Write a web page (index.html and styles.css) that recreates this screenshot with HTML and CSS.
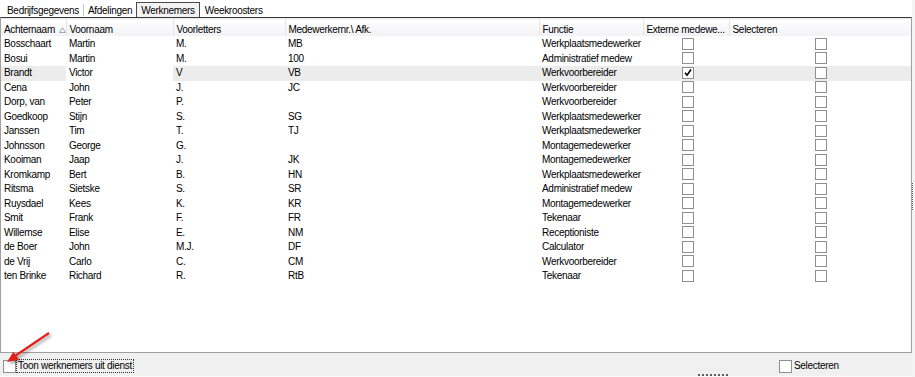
FILE: index.html
```html
<!DOCTYPE html>
<html lang="nl">
<head>
    <meta charset="UTF-8">
    <title>Werknemers</title>
    <link rel="stylesheet" href="styles.css">
</head>
<body>

    <div class="window">
        <div class="main">
            <!-- Tabs -->
            <div class="tabs">
                <span class="tab">Bedrijfsgegevens</span>
                <span class="tab-sep"></span>
                <span class="tab">Afdelingen</span>
                <span class="tab active">Werknemers</span>
                <span class="tab">Weekroosters</span>
            </div>

            <!-- Grid -->
            <div class="grid-box">
                <table class="grid">
                    <colgroup>
                        <col class="c-achternaam">
                        <col class="c-voornaam">
                        <col class="c-voorletters">
                        <col class="c-nummer">
                        <col class="c-functie">
                        <col class="c-extern">
                        <col>
                    </colgroup>
                    <thead>
                        <tr>
                            <th>Achternaam <svg class="sort" width="7" height="6" viewBox="0 0 7 6"><path d="M3.5 0.5 L6.5 5.5 L0.5 5.5 Z" fill="none" stroke="#a8a8a8"/></svg></th>
                            <th>Voornaam</th>
                            <th>Voorletters</th>
                            <th>Medewerkernr.\ Afk.</th>
                            <th>Functie</th>
                            <th>Externe medewe...</th>
                            <th class="last">Selecteren</th>
                        </tr>
                    </thead>
                    <tbody>
                        <tr><td>Bosschaart</td><td>Martin</td><td>M.</td><td>MB</td><td>Werkplaatsmedewerker</td><td class="cb1"><span class="cb"></span></td><td class="cb2"><span class="cb"></span></td></tr>
                        <tr><td>Bosui</td><td>Martin</td><td>M.</td><td>100</td><td>Administratief medew</td><td class="cb1"><span class="cb"></span></td><td class="cb2"><span class="cb"></span></td></tr>
                        <tr class="current"><td>Brandt</td><td class="focus">Victor</td><td>V</td><td>VB</td><td>Werkvoorbereider</td><td class="cb1"><span class="cb"><svg width="10" height="10" viewBox="0 0 10 10"><path d="M2 4.8 L4 7.2 L8 1.5" fill="none" stroke="#000" stroke-width="1.6"/></svg></span></td><td class="cb2"><span class="cb"></span></td></tr>
                        <tr><td>Cena</td><td>John</td><td>J.</td><td>JC</td><td>Werkvoorbereider</td><td class="cb1"><span class="cb"></span></td><td class="cb2"><span class="cb"></span></td></tr>
                        <tr><td>Dorp, van</td><td>Peter</td><td>P.</td><td></td><td>Werkvoorbereider</td><td class="cb1"><span class="cb"></span></td><td class="cb2"><span class="cb"></span></td></tr>
                        <tr><td>Goedkoop</td><td>Stijn</td><td>S.</td><td>SG</td><td>Werkplaatsmedewerker</td><td class="cb1"><span class="cb"></span></td><td class="cb2"><span class="cb"></span></td></tr>
                        <tr><td>Janssen</td><td>Tim</td><td>T.</td><td>TJ</td><td>Werkplaatsmedewerker</td><td class="cb1"><span class="cb"></span></td><td class="cb2"><span class="cb"></span></td></tr>
                        <tr><td>Johnsson</td><td>George</td><td>G.</td><td></td><td>Montagemedewerker</td><td class="cb1"><span class="cb"></span></td><td class="cb2"><span class="cb"></span></td></tr>
                        <tr><td>Kooiman</td><td>Jaap</td><td>J.</td><td>JK</td><td>Montagemedewerker</td><td class="cb1"><span class="cb"></span></td><td class="cb2"><span class="cb"></span></td></tr>
                        <tr><td>Kromkamp</td><td>Bert</td><td>B.</td><td>HN</td><td>Werkplaatsmedewerker</td><td class="cb1"><span class="cb"></span></td><td class="cb2"><span class="cb"></span></td></tr>
                        <tr><td>Ritsma</td><td>Sietske</td><td>S.</td><td>SR</td><td>Administratief medew</td><td class="cb1"><span class="cb"></span></td><td class="cb2"><span class="cb"></span></td></tr>
                        <tr><td>Ruysdael</td><td>Kees</td><td>K.</td><td>KR</td><td>Montagemedewerker</td><td class="cb1"><span class="cb"></span></td><td class="cb2"><span class="cb"></span></td></tr>
                        <tr><td>Smit</td><td>Frank</td><td>F.</td><td>FR</td><td>Tekenaar</td><td class="cb1"><span class="cb"></span></td><td class="cb2"><span class="cb"></span></td></tr>
                        <tr><td>Willemse</td><td>Elise</td><td>E.</td><td>NM</td><td>Receptioniste</td><td class="cb1"><span class="cb"></span></td><td class="cb2"><span class="cb"></span></td></tr>
                        <tr><td>de Boer</td><td>John</td><td>M.J.</td><td>DF</td><td>Calculator</td><td class="cb1"><span class="cb"></span></td><td class="cb2"><span class="cb"></span></td></tr>
                        <tr><td>de Vrij</td><td>Carlo</td><td>C.</td><td>CM</td><td>Werkvoorbereider</td><td class="cb1"><span class="cb"></span></td><td class="cb2"><span class="cb"></span></td></tr>
                        <tr><td>ten Brinke</td><td>Richard</td><td>R.</td><td>RtB</td><td>Tekenaar</td><td class="cb1"><span class="cb"></span></td><td class="cb2"><span class="cb"></span></td></tr>
                    </tbody>
                </table>
            </div>

            <!-- Footer -->
            <div class="footer">
                <label class="check focused"><span class="cb"></span><span class="label">Toon werknemers uit dienst</span></label>
                <span class="grip-h"></span>
                <label class="check select-all"><span class="cb"></span><span class="label">Selecteren</span></label>
            </div>
        </div>

        <div class="side">
            <span class="grip-v"></span>
        </div>

        <!-- red annotation arrow -->
        <svg class="arrow" width="70" height="50" viewBox="0 0 70 50">
            <path d="M49 8 L15 31" stroke="#e3201b" stroke-width="2.2" fill="none"/>
            <path d="M7 37 L19 34.8 L13.4 26.8 Z" fill="#e3201b"/>
        </svg>
    </div>

</body>
</html>
```

FILE: styles.css
```css
body {
    margin: 0;
    font-family: "Liberation Sans", Arial, sans-serif;
    font-size: 10px;
    letter-spacing: -0.3px;
    color: #000;
    background-color: #fff;
}
.window {
    position: relative;
    display: flex;
    width: 915px;
    height: 377px;
    overflow: hidden;
}
.main {
    width: 913px;
    display: flex;
    flex-direction: column;
}
.side {
    flex: 1;
    background-color: #f4f4f4;
    padding-top: 183px;
}
.grip-v {
    display: block;
    width: 2px;
    height: 27px;
    border-left: 1px dotted #606060;
}

/* Tabs */
.tabs {
    height: 17px;
    display: flex;
    align-items: flex-end;
    padding-left: 3px;
}
.tab {
    height: 14px;
    line-height: 15px;
    padding: 0 4px;
}
.tab-sep {
    width: 1px;
    height: 12px;
    margin-bottom: 1px;
    background-color: #c8c8c8;
}
.tab.active {
    height: 14px;
    border: 1px solid #4a4a4a;
    border-bottom: none;
    background-color: #f3f3f3;
    margin-right: 1px;
}

/* Grid */
.grid-box {
    height: 334px;
    border-top: 1px solid #3a3a3a;
    border-left: 1px solid #a0a0a0;
    border-right: 1px solid #a0a0a0;
    border-bottom: 1px solid #a0a0a0;
    background-color: #fff;
}
.grid {
    width: 100%;
    table-layout: fixed;
    border-collapse: collapse;
}
.c-achternaam { width: 65px; }
.c-voornaam { width: 107px; }
.c-voorletters { width: 112px; }
.c-nummer { width: 254px; }
.c-functie { width: 104px; }
.c-extern { width: 86px; }
.grid th {
    height: 14px;
    padding: 3px 0 0 3px;
    text-align: left;
    font-weight: normal;
    white-space: nowrap;
    overflow: hidden;
    background: linear-gradient(#ffffff, #f2f2f6);
    border-right: 1px solid #e6e6ea;
    border-top: 1px solid #e9e9ef;
}
.grid th.last {
    border-right: none;
}
.sort {
    margin-left: 2px;
    vertical-align: 0;
}
.grid td {
    height: 14.5px;
    padding: 0 0 0 3px;
    white-space: nowrap;
    overflow: hidden;
    line-height: 14px;
}
.grid tbody tr:first-child td {
    padding-top: 1px;
}
.grid tr.current td {
    background-color: #ececec;
}
.grid tr.current td.focus {
    background-color: #fff;
}
.grid td.cb1 {
    padding-left: 39px;
}
.grid td.cb2 {
    padding-left: 86px;
}
.cb {
    display: inline-block;
    width: 10px;
    height: 10px;
    border: 1px solid #8e8f8f;
    background-color: #fff;
    vertical-align: middle;
    position: relative;
    top: -1px;
}
.cb svg {
    display: block;
}

/* Footer */
.footer {
    flex: 1;
    display: flex;
    align-items: center;
    background-color: #f0f0f0;
    border-bottom: 1px solid #fafafa;
    padding: 3px 0 0 3px;
}
.check {
    display: flex;
    align-items: center;
}
.check .cb {
    top: 0;
    width: 11px;
    height: 11px;
}
.check .label {
    padding: 0 1px;
    margin-left: 1px;
    line-height: 12px;
}
.check.focused .label {
    outline: 1px dotted #333;
}
.grip-h {
    width: 30px;
    height: 2px;
    margin: 0 51px 0 565px;
    align-self: flex-end;
    border-top: 2px dotted #606060;
    box-sizing: border-box;
}

/* Annotation arrow */
.arrow {
    position: absolute;
    left: 0;
    top: 325px;
    pointer-events: none;
    filter: drop-shadow(2px 2px 1.5px rgba(0, 0, 0, 0.35));
}
```
